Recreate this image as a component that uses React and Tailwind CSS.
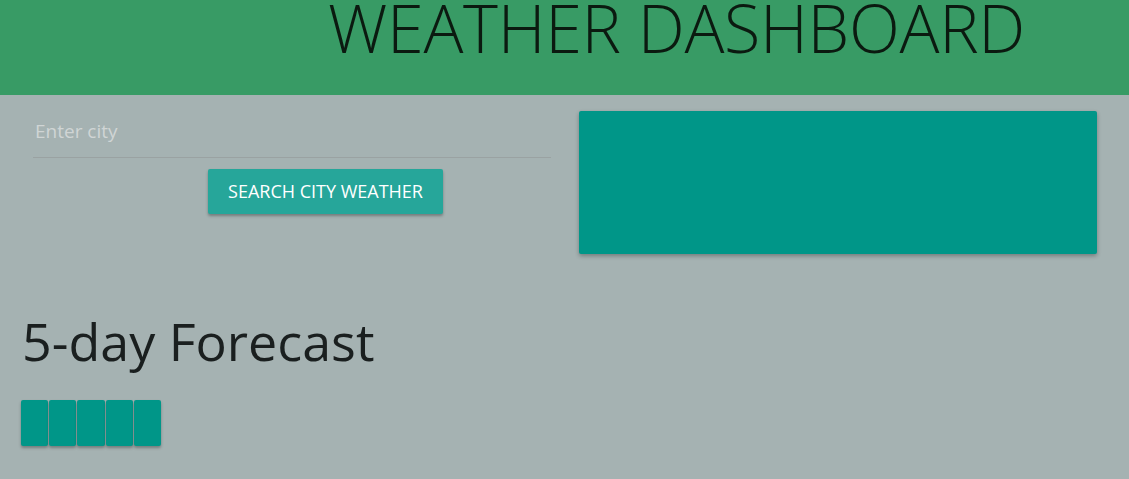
export default function App() {
  const days = [1, 2, 3, 4, 5];

  return (
    <div
      className="min-h-[479px] bg-[#a5b2b2]"
      style={{ fontFamily: '"Open Sans", "Noto Sans", sans-serif' }}
    >
      {/* Header */}
      <header className="h-[95px] bg-[#389b65] pl-[328px] overflow-hidden">
        <h1 className="text-[66.5px] font-light leading-[54px] tracking-[-0.3px] text-[#0b1a10] whitespace-nowrap">
          WEATHER DASHBOARD
        </h1>
      </header>

      {/* Search + current weather */}
      <div className="flex pt-4">
        <div className="w-[518px] ml-[33px] shrink-0">
          <input
            type="text"
            placeholder="Enter city"
            className="w-full h-[47px] pl-[2px] pb-[7px] bg-transparent border-b border-[#9aa2a2] text-[19px] text-[#333] placeholder:text-[#d0d5d5] outline-none"
          />
          <div className="flex mt-[11px] pl-[175px]">
            <button className="w-[235px] h-[45px] rounded-[2px] bg-[#26a69a] text-white text-[18px] uppercase shadow-[0_2px_3px_rgba(0,0,0,0.3)]">
              Search City Weather
            </button>
          </div>
        </div>

        <div className="ml-[28px] w-[518px] h-[143px] rounded-[2px] bg-[#009688] shadow-[0_2px_4px_rgba(0,0,0,0.3)]"></div>
      </div>

      {/* Forecast */}
      <h2 className="mt-[52px] ml-[22px] text-[52px] leading-[70px] text-[#1a1f1f]">
        5-day Forecast
      </h2>

      <div className="flex gap-[1px] ml-[21px] mt-[24px]">
        {days.map((d) => (
          <div
            key={d}
            className="w-[27.2px] h-[46px] rounded-[2px] bg-[#009688] shadow-[0_2px_3px_rgba(0,0,0,0.3)]"
          ></div>
        ))}
      </div>
    </div>
  );
}
